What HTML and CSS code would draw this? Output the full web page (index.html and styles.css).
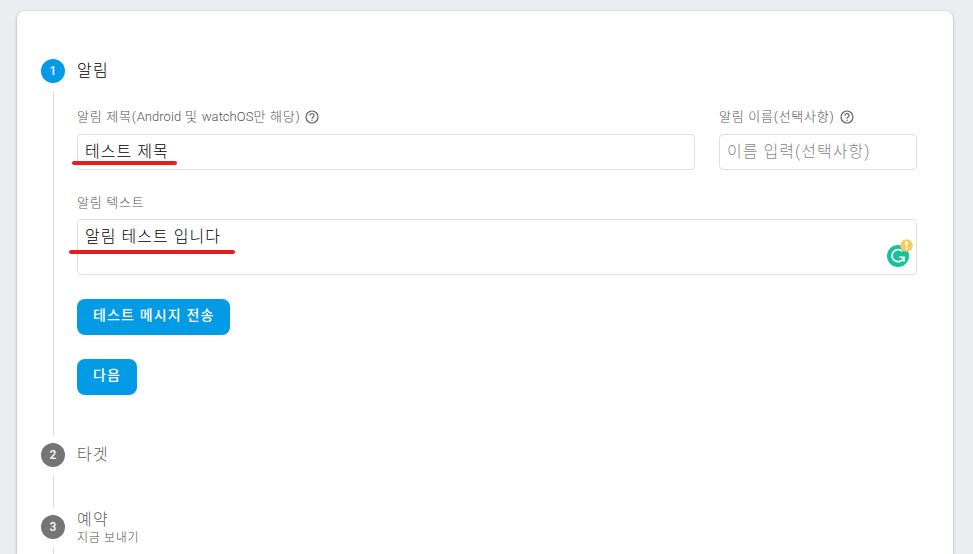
FILE: index.html
```
<!DOCTYPE html>
<html lang="ko">
<head>
<meta charset="utf-8">
<title>알림</title>
<link rel="stylesheet" href="styles.css">
</head>
<body>
<main class="card">
  <section class="step step-active">
    <div class="rail"><span class="num">1</span><i class="line"></i></div>
    <div class="body">
      <h2 class="title"><span>알림</span></h2>
      <div class="row">
        <div class="field">
          <div class="label"><span>알림 제목(<b class="latin">Android</b> 및 <b class="latin">watchOS</b>만 해당)</span>
            <svg class="help" viewBox="0 0 14 14"><circle cx="7" cy="7" r="6"/><path d="M5 5.6a2 2 0 1 1 3.2 1.5C7.4 7.7 7 8 7 8.8"/><path d="M7 9.7v1.2"/></svg>
          </div>
          <div class="input"><span>테스트 제목</span><i class="mark mark-title"></i></div>
        </div>
        <div class="field">
          <div class="label"><span>알림 이름(선택사항)</span>
            <svg class="help" viewBox="0 0 14 14"><circle cx="7" cy="7" r="6"/><path d="M5 5.6a2 2 0 1 1 3.2 1.5C7.4 7.7 7 8 7 8.8"/><path d="M7 9.7v1.2"/></svg>
          </div>
          <div class="input placeholder"><span>이름 입력(선택사항)</span></div>
        </div>
      </div>
      <div class="label label-text"><span>알림 텍스트</span></div>
      <div class="input area"><span>알림 테스트 입니다</span><i class="mark mark-text"></i>
        <svg class="grammar" viewBox="0 0 28 30">
          <circle cx="12" cy="18" r="11" fill="#15c39a"/>
          <path d="M16.3 13.4A6 6 0 1 0 17.6 20" fill="none" stroke="#fff" stroke-width="1.7"/>
          <path d="M13 19.2h5v4.6" fill="none" stroke="#fff" stroke-width="1.6"/>
          <circle cx="20.5" cy="7.5" r="6.2" fill="#f5cb62"/>
          <path d="M19.3 3.5h2.4l-.5 5.2h-1.4z" fill="#fff"/><circle cx="20.5" cy="10.6" r="1.1" fill="#fff"/>
        </svg>
      </div>
      <button class="btn btn-test"><span>테스트 메시지 전송</span></button>
      <button class="btn btn-next"><span>다음</span></button>
    </div>
  </section>
  <section class="step">
    <div class="rail"><span class="num">2</span><i class="line"></i></div>
    <div class="body"><h2 class="title"><span>타겟</span></h2></div>
  </section>
  <section class="step step-last">
    <div class="rail"><span class="num">3</span><i class="line line-open"></i></div>
    <div class="body two-line"><h2 class="title"><span>예약</span></h2><p class="sub"><span>지금 보내기</span></p></div>
  </section>
</main>
</body>
</html>
```
FILE: styles.css
```
* { box-sizing: border-box; }
html, body { height: 100%; }
body {
  margin: 0;
  padding: 11px 20px 0 17px;
  overflow: hidden;
  background: #eaeef1;
  font-family: Roboto, "Noto Sans CJK KR", sans-serif;
  font-weight: 300;
  color: #000;
}
.card {
  height: 100%;
  padding: 48px 36px 0 24px;
  background: #fff;
  border-radius: 8px 8px 0 0;
  box-shadow: 0 1px 3px rgba(0, 0, 0, .36);
}
.step { display: flex; gap: 12px; height: 72px; }
.step-active { height: 384px; }
.step-last { height: 39px; }
.rail { display: flex; flex-direction: column; width: 24px; }
.num {
  width: 24px; height: 24px;
  border-radius: 50%;
  background: #757575;
  color: #fff;
  font-size: 12px; font-weight: 500; line-height: 24px;
  text-align: center;
}
.step-active .num { background: #039be5; }
.line { flex: 1; width: 1px; margin: 8px 0 8px 12px; background: #dcdcdc; }
.line-open { margin-bottom: 0; }
.body { flex: 1; min-width: 0; }
.body span { display: inline-block; white-space: nowrap; }
.title { margin: 0; height: 24px; font-size: 16px; font-weight: 300; line-height: 24px; color: #606060; letter-spacing: 1.3px; }
.step-active .title { color: #000; }
.row { display: grid; grid-template-columns: 618px 198px; gap: 24px; margin-top: 23px; }
.label { display: flex; align-items: center; gap: 5px; height: 20px; font-size: 13px; line-height: 21px; color: #555; letter-spacing: .75px; }
.latin { font-weight: 300; letter-spacing: .05px; }
.help { width: 14px; height: 14px; margin-top: 2px; fill: none; stroke: #616161; stroke-width: 1.2; }
.input {
  position: relative;
  height: 36px;
  margin-top: 8px;
  padding: 0 7px;
  border: 1px solid #e0e0e0;
  border-radius: 4px;
  font-size: 16px; line-height: 33px;
  letter-spacing: 1.05px;
}
.placeholder { color: #888; }
.label-text { height: 21px; line-height: 22px; margin-top: 22px; }
.area { height: 56px; margin-top: 6px; }
.mark { position: absolute; height: 4px; border-radius: 2px; background: #e81c1e; }
.mark-title { left: -6px; top: 26px; width: 105px; }
.mark-text { left: -9px; top: 30px; width: 166px; }
.grammar { position: absolute; right: 2px; top: 18px; width: 28px; height: 30px; }
.btn {
  display: block;
  height: 36px;
  margin: 24px 0 0;
  padding: 0 0 3px 16px;
  border: 0;
  border-radius: 8px;
  background: #039be5;
  color: #fff;
  font: 500 14px/33px Roboto, "Noto Sans CJK KR", sans-serif;
  text-align: left;
}
.btn-test { width: 153px; letter-spacing: 1.15px; }
.btn-next { width: 60px; letter-spacing: 1.2px; }
.two-line { margin-top: -5px; }
.two-line .title { height: 20px; line-height: 20px; }
.sub { margin: 0; font-size: 12px; line-height: 16px; color: #505050; letter-spacing: .7px; }
```
